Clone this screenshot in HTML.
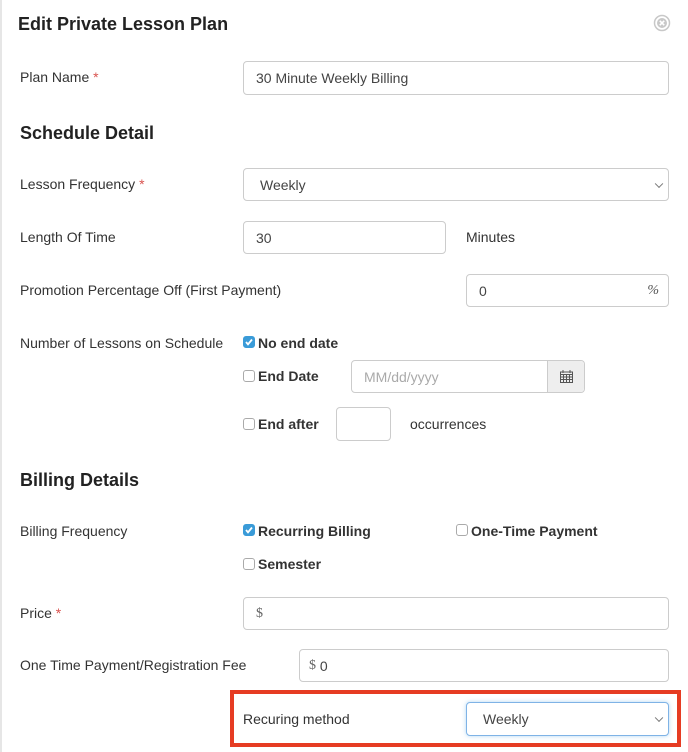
<!DOCTYPE html>
<html><head><style>
*{box-sizing:border-box;margin:0;padding:0}
body{width:688px;height:752px;background:#fff;font-family:"Liberation Sans",Arial,sans-serif;color:#333;position:relative;overflow:hidden;font-size:14px}
.a{position:absolute;white-space:nowrap}
.l{position:absolute;line-height:16px;transform:translateY(-8px);white-space:nowrap}
h{position:absolute;font-weight:bold;font-size:18px;color:#222;line-height:20px;transform:translateY(-10px);white-space:nowrap}
.in{position:absolute;border:1px solid #ccc;border-radius:4px;background:#fff;display:flex;align-items:center;padding-left:12px;color:#444}
.st{color:#d9534f}
.cb{position:absolute;width:12px;height:12px;border:1px solid #aaa;border-radius:3px;background:#fff}
.cb.on{background:#3a9bd8;border-color:#3a9bd8}
.b{font-weight:bold}
.chev{position:absolute;right:6px;top:50%;width:6px;height:6px;border-right:1px solid #777;border-bottom:1px solid #777;transform:translateY(-70%) rotate(45deg)}
</style></head><body>
<div class="a" style="left:0;top:0;width:2px;height:752px;background:#e6e6e6"></div>
<h style="left:18px;top:24px">Edit Private Lesson Plan</h>
<svg class="a" style="left:653px;top:14px" width="18" height="18" viewBox="0 0 18 18"><circle cx="9" cy="9" r="7.5" fill="none" stroke="#c8c8c8" stroke-width="1.5"/><circle cx="9" cy="9" r="5" fill="#c8c8c8"/><path d="M6.8 6.8l4.4 4.4M11.2 6.8l-4.4 4.4" stroke="#fff" stroke-width="1.6"/></svg>

<div class="l" style="left:20px;top:77px">Plan Name <span class="st">*</span></div>
<div class="in" style="left:243px;top:61px;width:426px;height:34px">30 Minute Weekly Billing</div>

<h style="left:20px;top:133px">Schedule Detail</h>
<div class="l" style="left:20px;top:184px">Lesson Frequency <span class="st">*</span></div>
<div class="in" style="left:243px;top:168px;width:426px;height:33px;padding-left:16px">Weekly<span class="chev"></span></div>

<div class="l" style="left:20px;top:237px">Length Of Time</div>
<div class="in" style="left:243px;top:221px;width:203px;height:33px">30</div>
<div class="l" style="left:466px;top:237px">Minutes</div>

<div class="l" style="left:20px;top:290px">Promotion Percentage Off (First Payment)</div>
<div class="in" style="left:466px;top:274px;width:203px;height:33px">0<span style="position:absolute;right:9px;font-family:'Liberation Serif',serif;font-style:italic;color:#555">%</span></div>

<div class="l" style="left:20px;top:343px">Number of Lessons on Schedule</div>
<div class="cb on" style="left:243px;top:336px"></div><svg class="a" style="left:244px;top:337px" width="10" height="10"><path d="M2 5l2 2.3L8 2.5" stroke="#fff" stroke-width="1.8" fill="none"/></svg>
<div class="l b" style="left:258px;top:343px">No end date</div>
<div class="cb" style="left:243px;top:370px"></div>
<div class="l b" style="left:258px;top:376px">End Date</div>
<div class="in" style="left:351px;top:360px;width:234px;height:33px;color:#aaa">MM/dd/yyyy
<div style="position:absolute;right:0;top:0;width:37px;height:31px;background:#eee;border-left:1px solid #ccc;border-radius:0 4px 4px 0"><svg style="position:absolute;left:12px;top:9px" width="13" height="13" viewBox="0 0 13 13"><rect x="0.5" y="2" width="12" height="10.5" fill="none" stroke="#555"/><path d="M0.5 4.5h12M3 0v3M10 0v3M0.5 7h12M0.5 9.5h12M3.5 4.5v8M6.5 4.5v8M9.5 4.5v8" stroke="#555" stroke-width="1"/></svg></div></div>
<div class="cb" style="left:243px;top:418px"></div>
<div class="l b" style="left:258px;top:424px">End after</div>
<div class="in" style="left:336px;top:407px;width:55px;height:34px"></div>
<div class="l" style="left:410px;top:424px">occurrences</div>

<h style="left:20px;top:480px">Billing Details</h>
<div class="l" style="left:20px;top:531px">Billing Frequency</div>
<div class="cb on" style="left:243px;top:524px"></div><svg class="a" style="left:244px;top:525px" width="10" height="10"><path d="M2 5l2 2.3L8 2.5" stroke="#fff" stroke-width="1.8" fill="none"/></svg>
<div class="l b" style="left:258px;top:531px">Recurring Billing</div>
<div class="cb" style="left:456px;top:524px"></div>
<div class="l b" style="left:471px;top:531px">One-Time Payment</div>
<div class="cb" style="left:243px;top:558px"></div>
<div class="l b" style="left:258px;top:564px">Semester</div>

<div class="l" style="left:20px;top:613px">Price <span class="st">*</span></div>
<div class="in" style="left:243px;top:597px;width:426px;height:33px;font-family:'Liberation Serif',serif;color:#666">$</div>
<div class="l" style="left:20px;top:665px">One Time Payment/Registration Fee</div>
<div class="in" style="left:299px;top:649px;width:370px;height:33px;padding-left:9px"><span style="font-family:'Liberation Serif',serif;color:#666">$</span>&nbsp;0</div>

<div class="a" style="left:230px;top:690px;width:451px;height:57px;border:4px solid #e63c23"></div>
<div class="l" style="left:243px;top:719px">Recuring method</div>
<div class="in" style="left:466px;top:702px;width:203px;height:34px;border-color:#7fb3e6;box-shadow:0 0 4px rgba(102,175,233,.5);padding-left:16px">Weekly<span class="chev"></span></div>
</body></html>
